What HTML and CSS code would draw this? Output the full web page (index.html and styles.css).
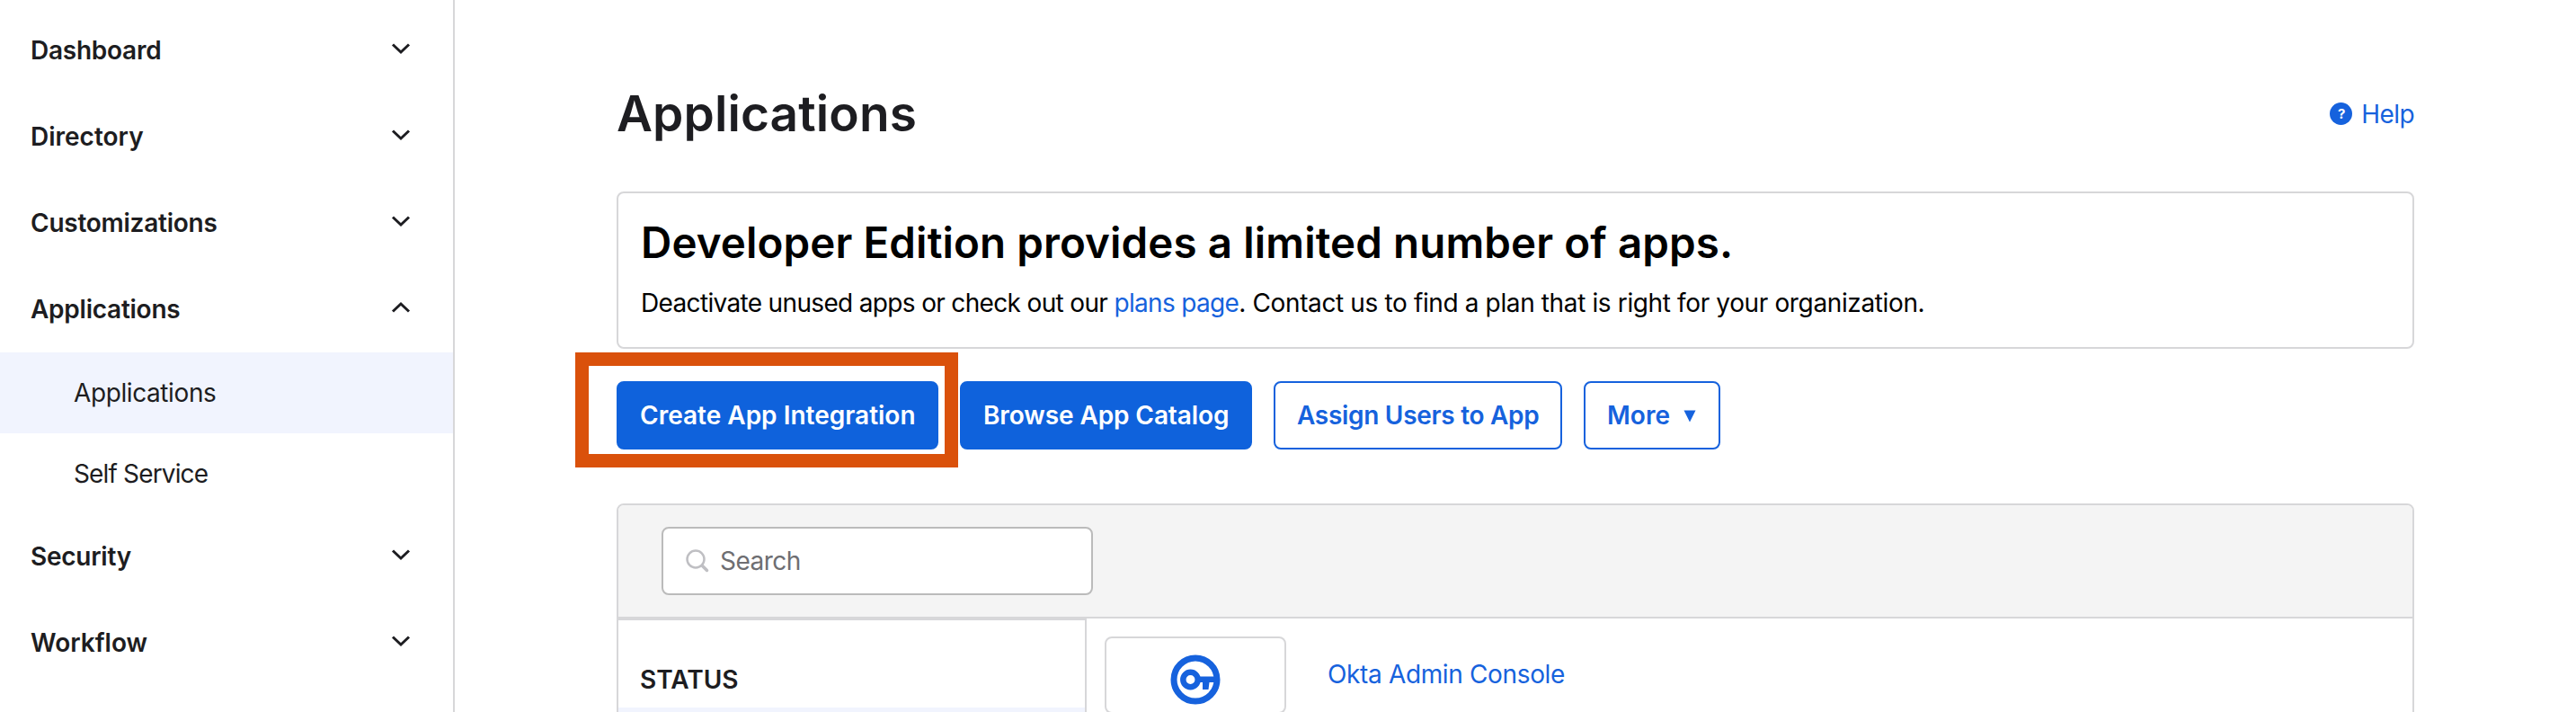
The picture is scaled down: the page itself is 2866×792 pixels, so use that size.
FILE: index.html
```html
<!DOCTYPE html>
<html lang="en">
<head>
    <meta charset="UTF-8">
    <title>Applications</title>
    <link rel="stylesheet" href="styles.css">
</head>
<body>
    <nav class="sidebar">
        <a class="nav-item tight"><span>Dashboard</span><svg class="chevron" viewBox="0 0 24 14"><path d="M3 2.5l9 8.5 9-8.5"/></svg></a>
        <a class="nav-item"><span>Directory</span><svg class="chevron" viewBox="0 0 24 14"><path d="M3 2.5l9 8.5 9-8.5"/></svg></a>
        <a class="nav-item tight"><span>Customizations</span><svg class="chevron" viewBox="0 0 24 14"><path d="M3 2.5l9 8.5 9-8.5"/></svg></a>
        <a class="nav-item tight"><span>Applications</span><svg class="chevron" viewBox="0 0 24 14"><path d="M3 11.5l9-8.5 9 8.5"/></svg></a>
        <div class="sub-nav">
            <a class="sub-item active">Applications</a>
            <a class="sub-item self-service">Self Service</a>
        </div>
        <a class="nav-item tight"><span>Security</span><svg class="chevron" viewBox="0 0 24 14"><path d="M3 2.5l9 8.5 9-8.5"/></svg></a>
        <a class="nav-item"><span>Workflow</span><svg class="chevron" viewBox="0 0 24 14"><path d="M3 2.5l9 8.5 9-8.5"/></svg></a>
    </nav>
    <main class="content">
        <header class="page-header">
            <h1>Applications</h1>
            <a class="help-link"><span class="help-icon">?</span><span>Help</span></a>
        </header>
        <section class="notice">
            <h2>Developer Edition provides a limited number of apps.</h2>
            <p><span class="lead">Deactivate unused apps or check out our <a>plans page</a></span>. Contact us to find a plan that is right for your organization.</p>
        </section>
        <div class="actions">
            <button class="btn primary create">Create App Integration</button>
            <button class="btn primary browse">Browse App Catalog</button>
            <button class="btn assign">Assign Users to App</button>
            <button class="btn more">More<svg class="caret" viewBox="0 0 14 14"><path d="M0.500 0.500h13L7 13.500z"/></svg></button>
            <div class="highlight"></div>
        </div>
        <section class="app-panel">
            <div class="panel-top">
                <div class="search-box">
                    <svg class="search-icon" viewBox="0 0 26 26"><circle cx="11" cy="11" r="9.500"/><path class="handle" d="M18.500 18.500l5 5"/></svg>
                    <span>Search</span>
                </div>
            </div>
            <div class="panel-body">
                <div class="filters">
                    <div class="filter-title">STATUS</div>
                    <div class="filter-row"></div>
                </div>
                <div class="app-row">
                    <div class="app-logo">
                        <svg viewBox="0 0 56 56"><circle class="ring" cx="28" cy="28" r="24"/><circle class="key" cx="22.500" cy="28" r="8.200"/><path d="M31 24.500h21v6.500h-8.500l-1 8h-6.500v-8h-5z"/></svg>
                    </div>
                    <a class="app-name">Okta Admin Console</a>
                </div>
            </div>
        </section>
    </main>
</body>
</html>
```
FILE: styles.css
```css
* {
    box-sizing: border-box;
}

body {
    margin: 0;
    height: 792px;
    display: flex;
    overflow: hidden;
    background-color: #fff;
    color: #1d1d21;
    font-family: Inter, "Liberation Sans", sans-serif;
    font-size: 28px;
    line-height: 40px;
}

h1, h2, p {
    margin: 0;
}

.sidebar {
    width: 506px;
    flex-shrink: 0;
    padding-top: 8px;
    border-right: 2px solid #d7d7d9;
}

.nav-item {
    display: flex;
    align-items: center;
    justify-content: space-between;
    height: 96px;
    padding: 0 46px 0 34px;
    font-weight: 600;
}

.nav-item.tight {
    letter-spacing: -0.25px;
}

.chevron {
    width: 24px;
    height: 14px;
    margin-top: -5px;
    fill: none;
    stroke: #1d1d21;
    stroke-width: 3;
}

.sub-nav {
    height: 179px;
}

.sub-item {
    display: flex;
    align-items: center;
    height: 90px;
    padding-left: 82px;
    padding-bottom: 1px;
    letter-spacing: -0.4px;
}

.sub-item.active {
    background-color: #f1f4fe;
}

.self-service {
    letter-spacing: -0.85px;
}

.content {
    width: 2000px;
    margin-left: 180px;
}

.page-header {
    display: flex;
    align-items: center;
    justify-content: space-between;
    height: 213px;
}

h1 {
    margin-top: 39px;
    font-size: 55px;
    font-weight: 600;
    line-height: 70px;
    letter-spacing: 0.1px;
}

.help-link {
    display: flex;
    align-items: center;
    gap: 10px;
    margin-top: 40px;
    color: #1662dd;
    letter-spacing: -0.6px;
}

.help-icon {
    width: 25px;
    height: 25px;
    border-radius: 50%;
    background-color: #1662dd;
    color: #fff;
    font-size: 15px;
    font-weight: 700;
    line-height: 25px;
    text-align: center;
}

.notice {
    height: 175px;
    padding: 26px 25px 0;
    border: 2px solid #d7d7d9;
    border-radius: 8px;
    color: #000;
}

h2 {
    font-size: 47.500px;
    font-weight: 600;
    line-height: 58px;
    letter-spacing: 0.1px;
}

.notice p {
    margin-top: 18px;
    letter-spacing: -0.37px;
    white-space: nowrap;
}

.notice .lead {
    letter-spacing: -0.66px;
}

.notice a {
    color: #1662dd;
}

.actions {
    position: relative;
    display: flex;
    gap: 24px;
    margin-top: 36px;
}

.btn {
    display: flex;
    align-items: center;
    height: 76px;
    padding: 0 0 1px 24px;
    border: 2px solid #1662dd;
    border-radius: 8px;
    background-color: #fff;
    color: #1662dd;
    font-family: inherit;
    font-size: 28px;
    font-weight: 600;
    white-space: nowrap;
}

.btn.primary {
    background-color: #0f62dc;
    border-color: #0f62dc;
    color: #fff;
}

.create {
    width: 358px;
}

.browse {
    width: 325px;
    letter-spacing: -0.1px;
}

.assign {
    width: 321px;
    letter-spacing: -0.3px;
}

.more {
    width: 152px;
    gap: 15px;
}

.caret {
    width: 14px;
    height: 14px;
    margin-top: 3px;
    fill: #1662dd;
}

.highlight {
    position: absolute;
    left: -46px;
    top: -32px;
    width: 426px;
    height: 128px;
    border: 15px solid #da510b;
}

.app-panel {
    height: 260px;
    margin-top: 60px;
    border: 2px solid #d7d7d9;
    border-radius: 8px 8px 0 0;
}

.panel-top {
    height: 126px;
    padding: 24px 0 0 48px;
    border-bottom: 2px solid #d7d7d9;
    border-radius: 6px 6px 0 0;
    background-color: #f4f4f4;
}

.search-box {
    display: flex;
    align-items: center;
    gap: 12px;
    width: 480px;
    height: 76px;
    padding: 0 0 1px 25px;
    border: 2px solid #bbb;
    border-radius: 8px;
    background-color: #fff;
    color: #6e6e72;
    letter-spacing: -0.5px;
}

.search-icon {
    width: 26px;
    height: 26px;
    fill: none;
    stroke: #bfbfc3;
    stroke-width: 2.500;
}

.handle {
    stroke-width: 3.500;
    stroke-linecap: round;
}

.panel-body {
    display: flex;
}

.filters {
    width: 521px;
    height: 130px;
    border-top: 2px solid #d7d7d9;
    border-right: 2px solid #d7d7d9;
}

.filter-title {
    height: 97px;
    padding: 46px 0 0 24px;
    font-weight: 600;
}

.filter-row {
    height: 40px;
    background-color: #f1f4fe;
}

.app-row {
    display: flex;
    padding: 20px 0 0 20px;
}

.app-logo {
    display: flex;
    align-items: center;
    justify-content: center;
    width: 202px;
    height: 86px;
    padding-top: 10px;
    border: 2px solid #d7d7d9;
    border-radius: 8px;
}

.app-logo svg {
    width: 56px;
    height: 56px;
    fill: #1662dd;
}

.app-logo circle {
    fill: none;
    stroke: #1662dd;
}

.ring {
    stroke-width: 7;
}

.key {
    stroke-width: 6.500;
}

.app-name {
    margin: 22px 0 0 46px;
    color: #1662dd;
    letter-spacing: -0.35px;
}
```
